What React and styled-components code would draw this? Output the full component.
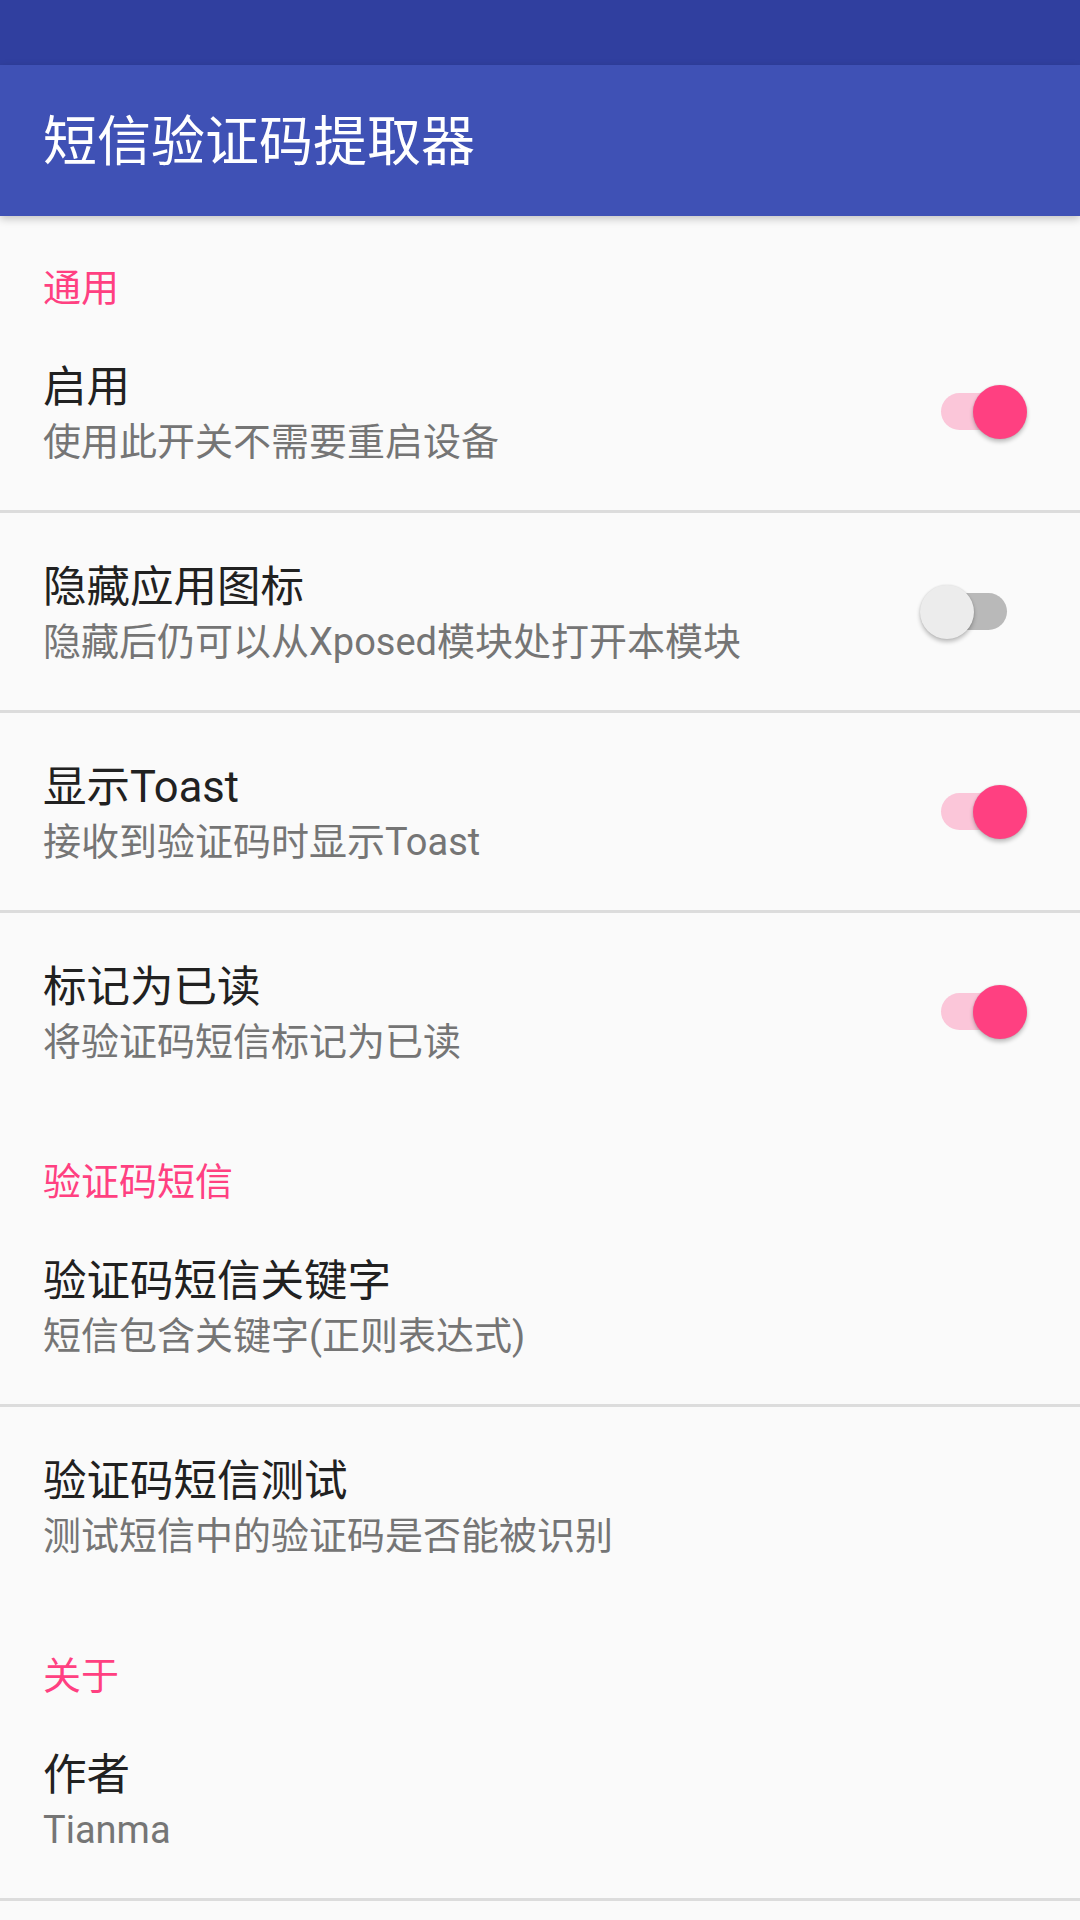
import React from "react";
import styled, { createGlobalStyle } from "styled-components";

const GlobalStyle = createGlobalStyle`
  html, body {
    margin: 0;
    padding: 0;
    background: #fafafa;
  }
  body {
    font-family: Roboto, "Noto Sans CJK SC", sans-serif;
  }
`;

export const Screen = styled.div`
  width: 1080px;
  min-height: 1920px;
  background: #fafafa;
  display: flex;
  flex-direction: column;
  overflow: hidden;
`;

export const StatusBar = styled.div`
  height: 65px;
  background: #303f9f;
`;

export const AppBar = styled.header`
  height: 151px;
  box-sizing: border-box;
  background: #3f51b5;
  display: flex;
  align-items: center;
  padding: 5px 0 0 43px;
  box-shadow: 0 3px 8px rgba(0, 0, 0, 0.22);
  position: relative;
  z-index: 1;
`;

export const Title = styled.h1`
  margin: 0;
  font-size: 54px;
  font-weight: 400;
  color: #ffffff;
  line-height: 60px;
`;

export const PrefList = styled.div`
  display: flex;
  flex-direction: column;
`;

export const Category = styled.div`
  height: 97px;
  box-sizing: border-box;
  padding: 49px 0 0 43px;
  font-size: 38px;
  line-height: 46px;
  color: #ff4081;
`;

export const Item = styled.div`
  min-height: 197px;
  box-sizing: border-box;
  padding: 0 52px 0 43px;
  display: flex;
  align-items: center;
  gap: 24px;
`;

export const Texts = styled.div`
  flex: 1;
  display: flex;
  flex-direction: column;
  padding-top: 9px;
`;

export const ItemTitle = styled.div`
  font-size: 43.5px;
  line-height: 52px;
  color: #212121;
`;

export const Summary = styled.div`
  font-size: 38px;
  line-height: 56px;
  color: #757575;
`;

export const Divider = styled.div`
  height: 3px;
  background: #dcdcdc;
`;

export const Switch = styled.div`
  position: relative;
  width: 108px;
  height: 54px;
  flex-shrink: 0;
`;

export const Track = styled.div`
  position: absolute;
  left: 21px;
  top: 8.5px;
  width: 66px;
  height: 37px;
  border-radius: 18.5px;
  background: ${(props) => (props.$on ? "#fbc6d9" : "#b9b9b9")};
`;

export const Thumb = styled.div`
  position: absolute;
  top: 0;
  left: ${(props) => (props.$on ? "53px" : "0")};
  width: 54px;
  height: 54px;
  border-radius: 50%;
  background: ${(props) => (props.$on ? "#ff4081" : "#ececec")};
  box-shadow: 0 3px 4px rgba(0, 0, 0, 0.24), 0 0 2px rgba(0, 0, 0, 0.12);
`;

const Toggle = ({ on }) => (
    <Switch>
        <Track $on={on} />
        <Thumb $on={on} />
    </Switch>
);

const sections = [
    {
        title: "通用",
        items: [
            { title: "启用", summary: "使用此开关不需要重启设备", toggle: true },
            { title: "隐藏应用图标", summary: "隐藏后仍可以从Xposed模块处打开本模块", toggle: false },
            { title: "显示Toast", summary: "接收到验证码时显示Toast", toggle: true },
            { title: "标记为已读", summary: "将验证码短信标记为已读", toggle: true },
        ],
    },
    {
        title: "验证码短信",
        items: [
            { title: "验证码短信关键字", summary: "短信包含关键字(正则表达式)" },
            { title: "验证码短信测试", summary: "测试短信中的验证码是否能被识别" },
        ],
    },
    {
        title: "关于",
        items: [{ title: "作者", summary: "Tianma", last: true }],
    },
];

const App = () => {
    return (
        <>
            <GlobalStyle />
            <Screen>
                <StatusBar />
                <AppBar>
                    <Title>短信验证码提取器</Title>
                </AppBar>
                <PrefList>
                    {sections.map((section) => (
                        <React.Fragment key={section.title}>
                            <Category>{section.title}</Category>
                            {section.items.map((item, i) => (
                                <React.Fragment key={item.title}>
                                    <Item>
                                        <Texts>
                                            <ItemTitle>{item.title}</ItemTitle>
                                            <Summary>{item.summary}</Summary>
                                        </Texts>
                                        {item.toggle !== undefined && <Toggle on={item.toggle} />}
                                    </Item>
                                    {(i < section.items.length - 1 || item.last) && <Divider />}
                                </React.Fragment>
                            ))}
                        </React.Fragment>
                    ))}
                </PrefList>
            </Screen>
        </>
    );
};

export default App;
